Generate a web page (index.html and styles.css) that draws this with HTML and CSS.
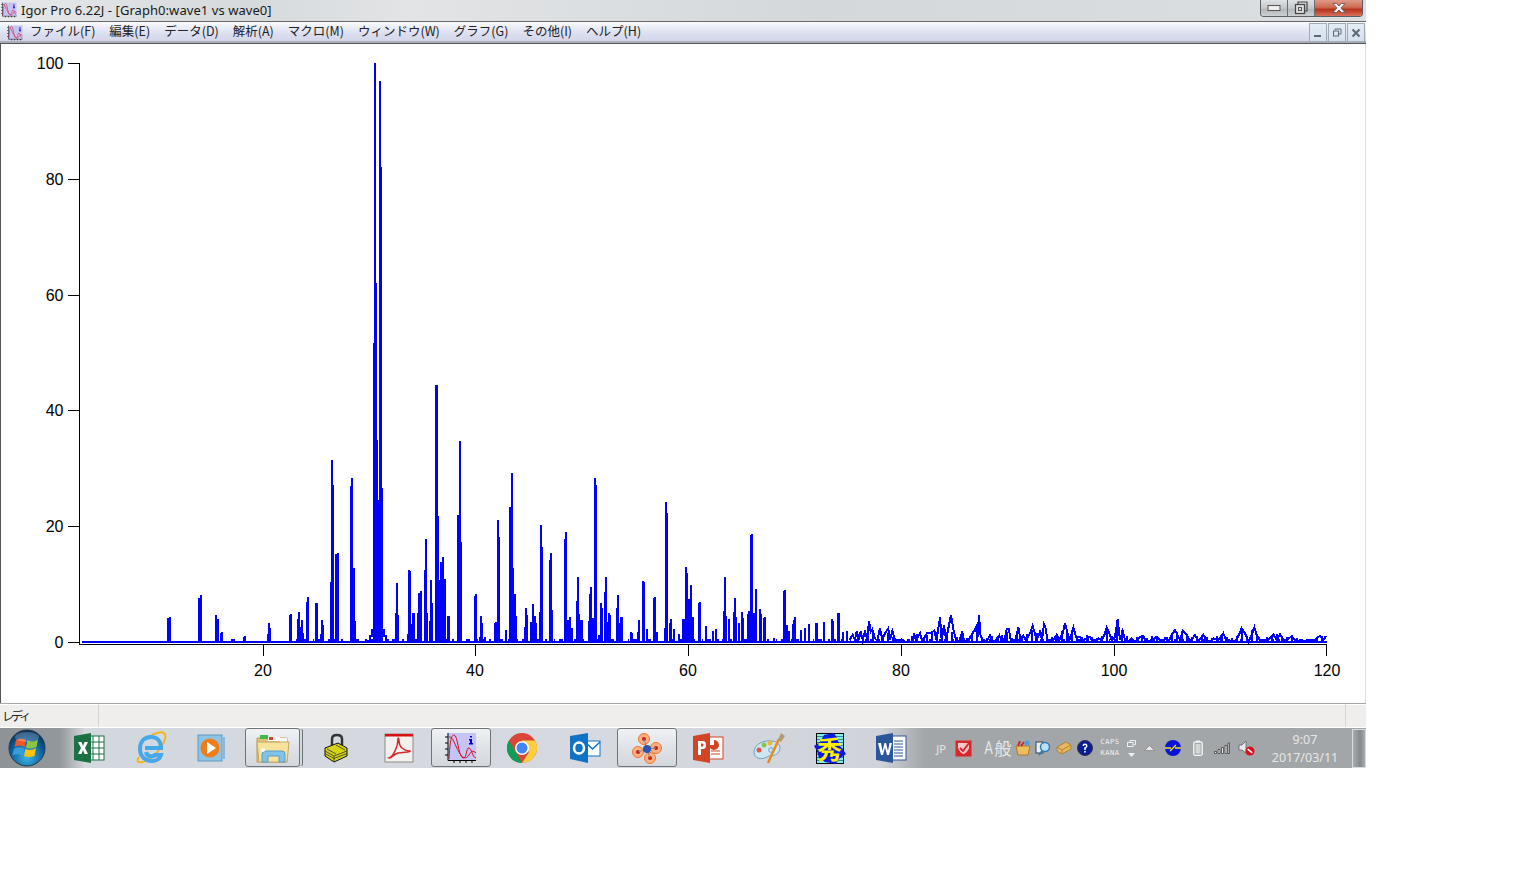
FILE: index.html
```html
<!DOCTYPE html>
<html lang="ja">
<head>
<meta charset="utf-8">
<title>Igor Pro 6.22J</title>
<link rel="stylesheet" href="styles.css">
</head>
<body>
<svg class="defs" width="0" height="0" aria-hidden="true">
  <defs>
    <symbol id="igor" viewBox="0 0 32 32">
      <rect x="3" y="1" width="28" height="27" fill="#c4c4f6"/>
      <path d="M3 1V28.500H31M0 5H3M0 11H3M0 17H3M0 23H3M9 28v3M15 28v3M21 28v3M27 28v3" fill="none" stroke="#000" stroke-width="1"/>
      <path d="M4 27C5 10 6 3 9 3C13 3 13 24 18 26C22 27 21 15 24 16C27 17 27 25 31 26" fill="none" stroke="#d4101c" stroke-width="1"/>
      <path d="M4 5C8 4 10 14 14 20C17 26 21 28 24 23C26 19 28 18 31 21" fill="none" stroke="#d4101c" stroke-width="1"/>
      <path d="M25 4h2v1.500h-2zM24 7h3v4h1v1.500h-4v-1.500h1v-2.500h-1z" fill="#0000c8"/>
    </symbol>
  </defs>
</svg>
<div class="window">
  <header class="titlebar">
    <svg class="app-icon" viewBox="0 0 32 32"><use href="#igor"/></svg>
    <span class="title-text">Igor Pro 6.22J - [Graph0:wave1 vs wave0]</span>
    <div class="caption">
      <div class="cap cap-min"><svg width="14" height="8" viewBox="0 0 14 8"><rect x="1" y="1.500" width="12" height="5" fill="#eee" stroke="#555"/></svg></div>
      <div class="cap cap-max"><svg width="14" height="14" viewBox="0 0 14 14"><path d="M4 3V1H13V10H11" fill="none" stroke="#444" stroke-width="1.200"/><rect x="1.500" y="3.500" width="9" height="9" fill="#ddd" stroke="#444" stroke-width="1.200"/><rect x="4.500" y="6.500" width="3" height="3" fill="none" stroke="#555"/></svg></div>
      <div class="cap cap-close"><svg width="16" height="12" viewBox="0 0 16 12"><path d="M2 1.500H5.500L8 4L10.500 1.500H14L10 6L14 10.500H10.500L8 8L5.500 10.500H2L6 6Z" fill="#f4f4f4" stroke="#555" stroke-width=".8"/></svg></div>
    </div>
  </header>
  <nav class="menubar">
    <svg class="menu-icon" viewBox="0 0 32 32"><use href="#igor"/></svg>
    <ul class="menu">
      <li>ファイル(F)</li><li>編集(E)</li><li>データ(D)</li><li>解析(A)</li><li>マクロ(M)</li><li>ウィンドウ(W)</li><li>グラフ(G)</li><li>その他(I)</li><li>ヘルプ(H)</li>
    </ul>
    <div class="mdi">
      <div class="mdi-btn"><svg width="10" height="10" viewBox="0 0 10 10"><path d="M1 8H8" stroke="#5c6876" stroke-width="2"/></svg></div>
      <div class="mdi-btn"><svg width="10" height="10" viewBox="0 0 10 10"><path d="M3 2V1H9V6H7" fill="none" stroke="#5c6876"/><rect x="1.500" y="3" width="5" height="5" fill="none" stroke="#5c6876"/></svg></div>
      <div class="mdi-btn"><svg width="10" height="10" viewBox="0 0 10 10"><path d="M1.500 1.500L8.500 8.500M8.500 1.500L1.500 8.500" stroke="#5c6876" stroke-width="2"/></svg></div>
    </div>
  </nav>
  <main class="graph">
    <svg class="plot" width="1364" height="659" viewBox="0 44 1364 659">
      <g class="axes">
        <path d="M79.500 63V644.500M68 63.500H79.500M68 179.500H79.500M68 295.500H79.500M68 410.500H79.500M68 526.500H79.500M68 642.500H79.500M79 644.500H1327M263.500 644V656M475.500 644V656M688.500 644V656M901.500 644V656M1114.500 644V656M1326.500 644V656"/>
      </g>
      <g class="ylabels">
        <text x="63.500" y="69">100</text><text x="63.500" y="185">80</text><text x="63.500" y="301">60</text><text x="63.500" y="416">40</text><text x="63.500" y="532">20</text><text x="63.500" y="648">0</text>
      </g>
      <g class="xlabels">
        <text x="263" y="676">20</text><text x="475" y="676">40</text><text x="688" y="676">60</text><text x="901" y="676">80</text><text x="1114" y="676">100</text><text x="1327" y="676">120</text>
      </g>
      <path class="trace" d="M82 642H1327"/>
      <path class="trace trace-feet" d="M296 640H500"/>
      <path class="trace trace-feet" d="M500 640H1327"/>
      <path class="trace" d="M366 641H370V636H372V630H374V642M382 630H384V636H386V640H388V642"/>
      <path class="trace" d="M374 642V343M375 642V63M376 642V283M377 642V440M378 642V500M380 642V81M381 642V167M382 642V488"/>
      <path class="trace" d="M858 642V634M863 642V636M868 642V637M873 642V633M878 642V638M883 642V635M888 642V633M893 642V637M898 642V639M912 642V636M917 642V634M922 642V638M927 642V635M932 642V633M937 642V632M942 642V636M947 642V634M952 642V632M957 642V637M962 642V633M967 642V638M972 642V634M977 642V631M982 642V637M987 642V638M992 642V636M997 642V637M1002 642V635M1007 642V632M1012 642V638M1017 642V633M1022 642V636M1027 642V634M1032 642V630M1037 642V633M1042 642V632M1047 642V635M1052 642V637M1057 642V634M1062 642V631M1067 642V630M1072 642V632M1077 642V636M1082 642V637M1087 642V635M1092 642V637M1097 642V638M1102 642V636M1107 642V630M1112 642V636M1117 642V626M1122 642V630M1127 642V636M1132 642V639M1137 642V637M1142 642V636M1147 642V638M1152 642V636M1157 642V637M1162 642V639M1167 642V637M1172 642V634M1177 642V632M1182 642V631M1187 642V636M1192 642V637M1197 642V636M1202 642V635M1207 642V637M1212 642V638M1217 642V636M1222 642V634M1227 642V637M1232 642V638M1237 642V636M1242 642V630M1247 642V636M1252 642V630M1257 642V635M1262 642V639M1267 642V637M1272 642V635M1277 642V634M1282 642V638M1287 642V637M1292 642V636M1297 642V638M1302 642V640M1307 642V639M1312 642V639M1317 642V637M1322 642V636"/>
      <g transform="translate(150 440) scale(.33333)">
        <path class="trace-z" d="M54 606V535M59 606V532M147 606V475M152 606V465M198 606V525M204 606V537M213 606V580M216 606V576M247 606V598M251 606V598M283 606V590M286 606V588M353 606V582M356 606V549M360 606V565M420 606V525M423 606V522M444 606V537M447 606V516M452 606V560M456 606V540M460 606V580M471 606V486M474 606V471M498 606V489M501 606V489M513 606V582M516 606V540M519 606V555M543 606V425M546 606V60M549 606V135M559 606V342M564 606V340M602 606V138M605 606V114M610 606V384M613 606V384M616 606V544M738 606V519M741 606V430M744 606V525M774 606V582M777 606V390M780 606V393M786 606V552M790 606V519M793 606V519M804 606V520M807 606V458M813 606V453M826 606V390M829 606V297M832 606V520M840 606V543M843 606V420M846 606V490M858 606V-165M861 606V-165M864 606V228M868 606V420M874 606V366M879 606V351M882 606V420M885 606V417M895 606V528M898 606V528M924 606V225M930 606V3M933 606V306M975 606V468M978 606V462M990 606V590M993 606V528M996 606V550M1004 606V590M1035 606V549M1039 606V546M1044 606V240M1047 606V291"/>
      </g>
      <g transform="translate(500 470) scale(.33333)">
        <path class="trace-z" d="M17 516V480M30 516V110M36 516V9M39 516V294M45 516V372M48 516V438M75 516V470M78 516V414M81 516V435M93 516V456M100 516V402M105 516V438M108 516V460M120 516V426M123 516V165M126 516V231M150 516V270M153 516V249M156 516V420M194 516V207M197 516V186M204 516V450M209 516V441M216 516V474M231 516V393M234 516V321M237 516V432M243 516V450M246 516V450M267 516V453M270 516V372M273 516V351M279 516V445M285 516V24M288 516V45M297 516V495M303 516V399M306 516V414M315 516V366M318 516V321M324 516V455M327 516V429M330 516V435M351 516V414M354 516V375M357 516V460M363 516V441M366 516V441M393 516V486M396 516V490M414 516V485M417 516V450M429 516V333M432 516V336M441 516V477M462 516V384M465 516V381M471 516V486M495 516V475M498 516V96M501 516V129M510 516V458M513 516V447M522 516V477M537 516V492M549 516V447M554 516V447M558 516V291M561 516V309M567 516V387M570 516V445M573 516V345M576 516V445M579 516V441M597 516V399M600 516V396M618 516V468M639 516V483M648 516V477M672 516V423M675 516V321M678 516V438M687 516V447M702 516V426M705 516V384M708 516V441M717 516V459M726 516V426M729 516V444M744 516V432M747 516V423M753 516V195M756 516V192M762 516V429M768 516V357M780 516V417M783 516V432M792 516V444M795 516V441M822 516V503M852 516V363M855 516V360M860 516V465M867 516V484M879 516V462M882 516V450M885 516V441M903 516V480M915 516V474M927 516V462M948 516V459M951 516V459M972 516V456M996 516V447M999 516V453M1014 516V429M1017 516V429M1029 516V486M1041 516V483"/>
      </g>
      <g transform="translate(840 590) scale(.33333)">
        <polyline class="trace-z" points="28,150 38,135 45,150 50,125 56,150 62,125 68,150 75,125 82,150 87,93 92,125 97,118 105,145 112,153 120,115 127,150 135,130 145,115 150,150 157,122 165,150 175,153 185,148 195,155 218,155 222,130 228,153 240,130 246,153 255,140 262,128 272,130 283,122 290,150 300,82 305,150 312,105 318,150 333,75 340,118 348,150 358,153 367,125 372,153 385,150 395,135 408,112 412,150 417,75 422,140 430,150 440,155 450,136 458,155 470,150 478,136 486,155 495,145 500,118 507,118 512,150 525,153 535,112 542,150 550,138 558,150 570,130 578,107 583,125 590,150 600,125 606,150 612,103 617,115 622,150 640,150 650,135 658,150 668,130 675,100 680,120 688,150 695,130 700,112 708,140 720,140 730,150 740,145 750,140 758,155 775,145 785,150 795,130 800,112 808,130 815,150 825,140 833,88 840,150 848,122 855,150 870,155 875,145 885,155 900,140 910,138 918,155 935,150 950,140 960,150 970,155 975,145 985,155 995,135 1005,120 1012,135 1020,150 1028,122 1040,135 1050,155 1065,135 1075,155 1090,135 1100,150 1110,155 1120,145 1135,150 1150,130 1158,150 1165,150 1175,155 1190,150 1205,115 1215,130 1225,155 1235,135 1243,112 1250,135 1260,150 1270,150 1280,155 1300,133 1310,150 1320,133 1335,155 1355,138 1365,150 1385,155 1410,150 1425,150 1440,137 1450,150 1458,138"/>
      </g>
    </svg>
  </main>
  <footer class="statusbar">
    <span class="status-ready">レディ</span>
    <span class="status-main"></span>
    <span class="status-end"></span>
  </footer>
  <div class="taskbar">
    <div class="start">
      <svg width="40" height="38" viewBox="0 0 40 38">
        <defs><radialGradient id="orb" cx=".5" cy=".75" r=".75"><stop offset="0" stop-color="#3fb6e8"/><stop offset=".6" stop-color="#0d5f9c"/><stop offset="1" stop-color="#062e56"/></radialGradient></defs>
        <circle cx="20" cy="19" r="18" fill="url(#orb)" stroke="#26384a"/>
        <path d="M9 11Q14 8 19 11L17.500 18Q13 15 7.500 18Z" fill="#ec5a28"/>
        <path d="M20.500 11.500Q26 14 31 10.500L29.500 18Q24 20.500 19 18.500Z" fill="#8cc63e"/>
        <path d="M7 19.500Q12 17 17 19.500L15.500 26.500Q11 24 5.500 26.500Z" fill="#3a9bdc"/>
        <path d="M18.500 20Q24 22.500 29 19L27.500 27Q22 29 17 27Z" fill="#fdc30e"/>
        <ellipse cx="20" cy="8" rx="12" ry="5" fill="#fff" opacity=".22"/>
      </svg>
    </div>
    <div class="pins">
      <div class="pin"><svg width="32" height="32" viewBox="0 0 32 32"><rect x="14" y="4" width="17" height="24" fill="#fff" stroke="#1d7044"/><path d="M14 10H31M14 16H31M14 22H31M20 4V28M26 4V28" stroke="#1d7044"/><path d="M1 4L18 1V31L1 28Z" fill="#1d7044"/><path d="M5 10H8.500L10 14L11.500 10H15L12 16L15 22H11.500L10 18L8.500 22H5L8 16Z" fill="#fff"/></svg></div>
      <div class="pin"><svg width="34" height="34" viewBox="0 0 34 34"><path d="M5 26C0 33 9 33 18 26C26 20 33 8 31 3C29 0 22 1 15 6" fill="none" stroke="#f2b61c" stroke-width="2"/><path d="M11 17H27C27 9 22 6 17 6C10 6 6 11 6 18C6 26 12 30 18 30C22 30 26 28 27 24H21C19 26 13 26 12 21" fill="none" stroke="#44a8ea" stroke-width="4"/></svg></div>
      <div class="pin"><svg width="30" height="30" viewBox="0 0 30 30"><path d="M26 4H28V26H26z" fill="#8bb8d8"/><rect x="1" y="2" width="24" height="26" fill="#8fc3e4" stroke="#5d9cc6"/><circle cx="13" cy="15" r="9.500" fill="#ef7d1a"/><path d="M10 9L19 15L10 21Z" fill="#fff"/></svg></div>
      <div class="pin pin-open pin-stacked"><svg width="34" height="30" viewBox="0 0 34 30"><path d="M1 5H31V29H1Z" fill="#e2c27a" stroke="#b89a5a"/><path d="M4 2H12V6H4z" fill="#42b74a"/><path d="M12 4H24V8H12z" fill="#fff"/><path d="M13 4H17V7H13z" fill="#d6402a"/><path d="M24 5H31V9H24z" fill="#fff"/><path d="M1 9H33L31 29H3Z" fill="#f7e39c" stroke="#c4a866"/><path d="M6 29V21Q6 18 10 18H26Q29 18 29 21V29H23V23H12V29Z" fill="#7fc4e8" stroke="#5a9cc6"/><circle cx="7" cy="17" r="2" fill="#fff"/></svg></div>
      <div class="pin"><svg width="24" height="30" viewBox="0 0 24 30"><path d="M8 13V6Q8 2 13 2Q18 2 18 6V12" fill="none" stroke="#333" stroke-width="2.500"/><path d="M1 15L14 10L23 15V23L10 29L1 23Z" fill="#d6d418" stroke="#111"/><path d="M1 18L10 23L23 18M1 20.500L10 25.500L23 20.500M10 23V29M3 16L12 21M12 12L21 17" fill="none" stroke="#333" stroke-width=".8"/></svg></div>
      <div class="pin"><svg width="30" height="30" viewBox="0 0 30 30"><rect x="1" y="1" width="28" height="28" fill="#f3f1ee" stroke="#8a8a8a"/><rect x="1" y="1" width="28" height="2.500" fill="#d81010"/><path d="M5 25C9 24 14 14 14 6C14 4 15 5 15 8C15 14 20 18 26 18C27 19 20 19 14 20C10 21 7 26 5 25Z" fill="none" stroke="#d8262a" stroke-width="1.500"/></svg></div>
      <div class="pin pin-open"><svg width="32" height="32" viewBox="0 0 32 32"><use href="#igor"/></svg></div>
      <div class="pin"><svg width="30" height="30" viewBox="0 0 30 30"><circle cx="15" cy="15" r="15" fill="#db4437"/><path d="M15 30A15 15 0 0 1 2 7.500L9 19.500Z" fill="#0f9d58"/><path d="M15 7.500H28A15 15 0 0 1 15 30L22 19Z" fill="#ffcd40"/><circle cx="15" cy="15" r="7" fill="#fff"/><circle cx="15" cy="15" r="5.500" fill="#4285f4"/></svg></div>
      <div class="pin"><svg width="32" height="32" viewBox="0 0 32 32"><rect x="16" y="9" width="15" height="15" fill="#fff" stroke="#0f72c4"/><path d="M16 10L23.500 17L31 10" fill="none" stroke="#0f72c4" stroke-width="1.500"/><path d="M1 4L19 1V31L1 27Z" fill="#0f72c4"/><ellipse cx="10" cy="16" rx="5" ry="5.500" fill="none" stroke="#fff" stroke-width="2.500"/></svg></div>
      <div class="pin pin-open"><svg width="32" height="32" viewBox="0 0 32 32"><g fill="#fbb184" stroke="#f0762c"><circle cx="13" cy="7" r="5.500"/><circle cx="25" cy="16" r="5.500"/><circle cx="7" cy="20" r="5.500"/><circle cx="19" cy="26" r="5.500"/></g><g fill="#c81818"><circle cx="13" cy="7" r="2"/><circle cx="25" cy="16" r="2"/><circle cx="7" cy="20" r="2"/><circle cx="19" cy="26" r="2"/></g><path d="M13 7L16 17L25 16M7 20L16 17L19 26" stroke="#888" fill="none"/><circle cx="16" cy="17" r="4" fill="#2a55b0"/></svg></div>
      <div class="pin"><svg width="32" height="32" viewBox="0 0 32 32"><rect x="14" y="5" width="17" height="22" fill="#fff" stroke="#d14424"/><path d="M22 8A5 5 0 1 1 17 13H22Z" fill="#d14424"/><path d="M19 19H28M19 22H28" stroke="#d14424"/><path d="M1 4L18 1V31L1 28Z" fill="#d14424"/><path d="M6 23V9H11Q14 9 14 13Q14 17 11 17H9V23ZM9 11.500V14.500H10.500Q11.500 14.500 11.500 13Q11.500 11.500 10.500 11.500Z" fill="#fff"/></svg></div>
      <div class="pin"><svg width="34" height="32" viewBox="0 0 34 32"><path d="M2 20C2 12 12 8 20 9C28 10 30 16 26 21C22 25 20 22 15 25C10 28 2 27 2 20Z" fill="#cfe5f2" stroke="#6ca3c4"/><circle cx="7" cy="18" r="2.500" fill="#e2574a"/><circle cx="12" cy="13" r="2.500" fill="#8ec44a"/><circle cx="18" cy="11" r="2.500" fill="#f2b43a"/><circle cx="19" cy="18" r="2.300" fill="none" stroke="#6ca3c4"/><path d="M16 31L27 7" stroke="#e88a1c" stroke-width="2.500"/><path d="M26 8L29 1L33 4L29 10Z" fill="#b49a74"/></svg></div>
      <div class="pin"><div class="hide-icon"><svg class="hide-splat" width="32" height="32" viewBox="0 0 32 32"><path d="M0 13L6 9L10 2L20 0L23 5L26 13L30 18L32 21L25 26L22 31L11 29L5 25L3 18Z" fill="#0c18e4"/></svg><span class="hide-char">秀</span></div></div>
      <div class="pin"><svg width="32" height="32" viewBox="0 0 32 32"><rect x="15" y="4" width="16" height="24" fill="#fff" stroke="#2b579a"/><path d="M19 9H28M19 12H28M19 15H28M19 18H28M19 21H28M19 24H28" stroke="#2b579a"/><path d="M1 4L18 1V31L1 28Z" fill="#2b579a"/><path d="M3 11H6L7.500 19L9.500 11H11L13 19L14.500 11H17L14 23H12L10 15.500L8 23H6Z" fill="#fff"/></svg></div>
    </div>
    <div class="tray">
      <span class="tray-lang">JP</span>
      <svg width="17" height="17" viewBox="0 0 17 17"><rect x=".5" y=".5" width="16" height="16" fill="#d8262a"/><path d="M3 3H14V8Q12 13 8.500 14Q5 13 3 8Z" fill="#f4c8c8"/><path d="M5 8L8 11L14 3" fill="none" stroke="#d8262a" stroke-width="2"/></svg>
      <span class="tray-ime"><span class="tray-ime-a">A</span><span class="tray-ime-kanji">般</span></span>
      <svg width="16" height="16" viewBox="0 0 16 16"><path d="M1 6H15L13 15H3Z" fill="#eebd5c" stroke="#a87c2c"/><path d="M3 6L5 1M6 6L9 2" stroke="#c82828" stroke-width="2"/><circle cx="12" cy="3" r="2.500" fill="#4a9ee2"/></svg>
      <svg width="16" height="16" viewBox="0 0 16 16"><rect x="1" y="2" width="7" height="11" fill="#e8eef4" stroke="#345"/><circle cx="10" cy="7" r="4.500" fill="#bfe0f4" stroke="#2e7cb8" stroke-width="1.500"/><path d="M7 11L4 15" stroke="#2e7cb8" stroke-width="2"/></svg>
      <svg width="16" height="14" viewBox="0 0 16 14"><path d="M1 6L10 1L15 4V8L6 13L1 10Z" fill="#eab75e" stroke="#b08436"/><path d="M1 6L6 9V13M6 9L15 4" fill="none" stroke="#b08436"/></svg>
      <svg width="16" height="16" viewBox="0 0 16 16"><circle cx="8" cy="8" r="7.500" fill="#0a1c96" stroke="#334"/><path d="M5.500 6Q5.500 3.500 8 3.500Q10.500 3.500 10.500 6Q10.500 7.500 8.800 8.300V10H7.200V7.500Q9 7 9 6Q9 5 8 5Q7 5 7 6ZM7.200 11H8.800V12.500H7.200Z" fill="#fff"/></svg>
      <div class="tray-caps"><span>CAPS</span><span>KANA</span></div>
      <div class="tray-mini">
        <svg width="9" height="7" viewBox="0 0 9 7"><path d="M3 2V.5H8.500V4.500H6.500" fill="none" stroke="#eee"/><rect x=".5" y="2.500" width="5.500" height="4" fill="none" stroke="#eee"/></svg>
        <svg width="7" height="4" viewBox="0 0 7 4"><path d="M0 0H7L3.500 4Z" fill="#eee"/></svg>
      </div>
      <svg width="11" height="6" viewBox="0 0 11 6"><path d="M5.500 .5L10.500 5.500H.5Z" fill="#e8e8e8" stroke="#777" stroke-width=".6"/></svg>
      <svg width="16" height="16" viewBox="0 0 16 16"><circle cx="8" cy="8" r="8" fill="#0a14d8"/><path d="M0 8H6M10 8H16M5 11L11 5" stroke="#f4e41c" stroke-width="1.300"/></svg>
      <svg width="10" height="16" viewBox="0 0 10 16"><rect x="3" y=".5" width="4" height="2" fill="#eee"/><rect x=".75" y="2" width="8.500" height="13.300" rx="1.500" fill="#a4a8aa" stroke="#f4f4f4" stroke-width="1.300"/><rect x="2.500" y="4" width="5" height="9.500" fill="#d4d6d6"/></svg>
      <svg width="16" height="12" viewBox="0 0 16 12"><path d="M.5 9.500h2v2h-2zM4 7.500h2v4H4zM7.500 5.500h2v6h-2zM11 3.500h2v8h-2zM14 1h1.500v10.500H14z" fill="#e8e8e8" stroke="#333" stroke-width=".7"/></svg>
      <svg width="17" height="16" viewBox="0 0 17 16"><path d="M1 5H4L8 1V13L4 10H1Z" fill="#e8e8e8" stroke="#555" stroke-width=".7"/><circle cx="12" cy="11" r="4.500" fill="#d8101c"/><path d="M9 11H15" stroke="#fff" stroke-width="1.500" transform="rotate(40 12 11)"/></svg>
      <div class="clock"><span>9:07</span><span>2017/03/11</span></div>
      <div class="show-desktop"></div>
    </div>
  </div>
</div>
</body>
</html>
```
FILE: styles.css
```css
* { box-sizing: border-box; }
html, body { margin: 0; padding: 0; background: #fff; }
body { font-family: "Noto Sans", "Noto Sans CJK JP", sans-serif; }
.defs { position: absolute; }
.window { width: 1366px; height: 768px; display: flex; flex-direction: column; overflow: hidden; }

.titlebar { height: 21px; display: flex; align-items: flex-start; background: linear-gradient(90deg, #e6e8ea 0%, #d6dadc 18%, #e2e4e6 30%, #d4d8da 60%, #dcdfe1 100%); }
.app-icon { width: 16px; height: 16px; margin: 2px 4px 0 1px; flex: none; }
.title-text { font: 13px/21px "Noto Sans", sans-serif; letter-spacing: .06px; color: #1a1a1a; }
.caption { margin-left: auto; margin-right: 3px; display: flex; height: 17px; border: 1px solid #5c6064; border-top: 0; border-radius: 0 0 4px 4px; overflow: hidden; }
.cap { display: flex; align-items: center; justify-content: center; height: 16px; }
.cap-min { width: 27px; border-right: 1px solid #6a6e70; background: linear-gradient(#dfe2e4, #c4c8ca 50%, #b4b8ba 60%, #ccd0d2); }
.cap-max { width: 27px; border-right: 1px solid #6a6e70; background: linear-gradient(#dfe2e4, #c4c8ca 50%, #b4b8ba 60%, #ccd0d2); }
.cap-close { width: 47px; background: linear-gradient(#e09a88, #cf6a52 45%, #b8321c 60%, #d8735c); }

.menubar { height: 23px; display: flex; align-items: center; border-top: 1px solid #666; border-bottom: 1px solid #555; background: linear-gradient(#fff 0, #f6f7fb 6%, #d9ddee 60%, #d4d8ea 88%, #a9aeba 92%); }
.menu-icon { width: 16px; height: 16px; margin-left: 7px; flex: none; }
.menu { list-style: none; display: flex; gap: 14px; margin: -3px 0 0 7px; padding: 0; font: 12.5px/20px "Noto Sans CJK JP", sans-serif; color: #222; }
.mdi { margin-left: auto; display: flex; gap: 1px; margin-right: 1px; }
.mdi-btn { width: 18px; height: 19px; display: flex; align-items: center; justify-content: center; background: linear-gradient(#e4ecf4, #d6e0ec); border: 1px solid #9eacba; }

.graph { height: 659px; background: #fff; border-left: 1px solid #555; border-right: 1px solid #ddd; overflow: hidden; }
.plot { display: block; margin-left: -1px; }
.axes path { fill: none; stroke: #000; stroke-width: 1; shape-rendering: crispEdges; }
.ylabels text, .xlabels text { font: 16px "Liberation Sans", Arial, sans-serif; fill: #000; }
.ylabels text { text-anchor: end; }
.xlabels text { text-anchor: middle; }
.trace { fill: none; stroke: #0000ff; stroke-width: 2; shape-rendering: crispEdges; }
.trace-feet { stroke-dasharray: 3 5 2 7 1 4 4 6 2 3; }
.trace-z { fill: none; stroke: #0000ff; stroke-width: 6; stroke-linejoin: miter; shape-rendering: crispEdges; }

.statusbar { height: 25px; display: flex; background: #f0eded; border-top: 1px solid #a8a8a8; border-bottom: 1px solid #fff; box-shadow: inset 0 1px 0 #fff; font: 12px/23px "Noto Sans CJK JP", sans-serif; color: #222; }
.status-ready { width: 99px; padding-left: 2px; border-right: 1px solid #d8d6d4; letter-spacing: -3px; }
.status-main { flex: 1; border-right: 1px solid #d8d6d4; }
.status-end { width: 20px; }

.taskbar { height: 40px; display: flex; background: linear-gradient(90deg, #8d9397 0, #92989c 60px, #d3d8de 85px, #d6dae0 600px, #d0d4da 880px, #a2a6a9 925px, #a2a6a9 100%); }
.start { width: 58px; flex: none; display: flex; align-items: center; justify-content: flex-start; padding-left: 7px; }
.pins { display: grid; grid-template-columns: 62px 62px 60px 62px 63px 63px 61px 62px 63px 61px 61px 61px 61px 61px; flex: none; }
.pin { display: flex; align-items: center; justify-content: center; height: 40px; }
.pin-open { margin: 0 0 1px 1px; height: 39px; background: linear-gradient(#f0f2f4, #dfe3e7 50%, #d4d8dd); border: 1px solid #6f7478; border-radius: 3px; }
.pin-stacked { margin: 0 4px 1px 3px; box-shadow: 3px 0 0 -1px #d4d8dd, 4px 0 0 -1px #6f7478; }

.hide-icon { position: relative; width: 28px; height: 31px; background: repeating-linear-gradient(#7df0f0 0 2px, #2c8c98 2px 3px); border: 1px solid #000; display: flex; align-items: center; justify-content: center; }
.hide-splat { position: absolute; left: -3px; top: -1px; }
.hide-char { position: relative; font: 700 25px/28px "Noto Sans CJK JP", sans-serif; color: #ffee00; }

.tray { display: grid; grid-template-columns: 22px 22px 38px 21px 20px 21px 21px 30px 13px 22px 26px 24px 24px 24px 94px 14px; justify-items: center; align-items: center; margin-left: 9px; height: 40px; flex: none; }
.tray-lang { font: 11px "Noto Sans", sans-serif; color: #e8e8e8; }
.tray-ime { display: flex; align-items: center; color: #e8e8e8; white-space: nowrap; margin-left: 8px; }
.tray-ime-a { font: 19px/22px "Liberation Sans", sans-serif; transform: scaleX(.65); width: 9px; }
.tray-ime-kanji { font: 17px/22px "Noto Sans CJK JP", sans-serif; margin-left: 3px; }
.tray-caps { display: flex; flex-direction: column; font: 7px/11px "DejaVu Sans Mono", monospace; color: #f0f0f0; letter-spacing: .5px; }
.tray-mini { display: flex; flex-direction: column; align-items: center; gap: 6px; }
.clock { display: flex; flex-direction: column; align-items: center; padding-top: 2px; font: 12.5px/18px "Noto Sans", sans-serif; color: #e6e6e6; }
.show-desktop { width: 14px; height: 39px; background: linear-gradient(90deg, #a8acaf, #85898c 60%, #a8acaf); border: 1px solid #d8dadc; }
```
